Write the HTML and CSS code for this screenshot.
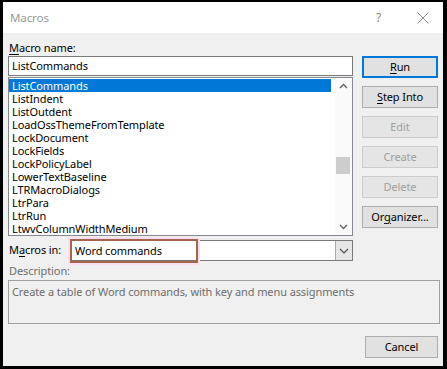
FILE: index.html
```html
<!DOCTYPE html>
<html>
<head>
<meta charset="utf-8">
<link rel="stylesheet" href="styles.css">
</head>
<body>
<div class="screen">
  <div class="dialog">
    <div class="titlebar">
      <span class="title">Macros</span>
      <span class="help">?</span>
      <svg class="close" width="12" height="12" viewBox="0 0 12 12"><path d="M0.5 0.5 L11.5 11.5 M11.5 0.5 L0.5 11.5" stroke="#8c8c8c" stroke-width="1" fill="none"/></svg>
    </div>
    <div class="content">
      <div class="main">
        <div class="left">
          <div class="label"><u>M</u>acro name:</div>
          <div class="input">ListCommands</div>
          <div class="list">
            <div class="items">
              <div class="item selected">ListCommands</div>
              <div class="item">ListIndent</div>
              <div class="item">ListOutdent</div>
              <div class="item">LoadOssThemeFromTemplate</div>
              <div class="item">LockDocument</div>
              <div class="item">LockFields</div>
              <div class="item">LockPolicyLabel</div>
              <div class="item">LowerTextBaseline</div>
              <div class="item">LTRMacroDialogs</div>
              <div class="item">LtrPara</div>
              <div class="item">LtrRun</div>
              <div class="item">LtwvColumnWidthMedium</div>
            </div>
            <div class="scrollbar">
              <svg class="arrow" width="17" height="17" viewBox="0 0 17 17"><path d="M5 10 L8.5 6.5 L12 10" stroke="#606060" stroke-width="1.3" fill="none"/></svg>
              <div class="track"><div class="thumb"></div></div>
              <svg class="arrow" width="17" height="17" viewBox="0 0 17 17"><path d="M5 7 L8.5 10.5 L12 7" stroke="#606060" stroke-width="1.3" fill="none"/></svg>
            </div>
          </div>
          <div class="macros-in">
            <div class="label inline">M<u>a</u>cros in:</div>
            <div class="combo">
              <div class="combo-text">Word commands</div>
              <div class="combo-btn"><svg width="10" height="6" viewBox="0 0 10 6"><path d="M1 1 L5 5 L9 1" stroke="#505050" stroke-width="1.2" fill="none"/></svg></div>
              <div class="highlight"></div>
            </div>
          </div>
        </div>
        <div class="right">
          <div class="btn default"><u>R</u>un</div>
          <div class="btn"><u>S</u>tep Into</div>
          <div class="btn disabled">Edit</div>
          <div class="btn disabled">Create</div>
          <div class="btn disabled">Delete</div>
          <div class="btn">Or<u>g</u>anizer...</div>
        </div>
      </div>
      <div class="label desc-label">Description:</div>
      <div class="desc">Create a table of Word commands, with key and menu assignments</div>
      <div class="footer">
        <div class="btn cancel">Cancel</div>
      </div>
    </div>
  </div>
</div>
</body>
</html>
```

FILE: styles.css
```css
* { box-sizing: border-box; }
html, body { margin: 0; padding: 0; background: #000; }
body { font-family: "Noto Sans", "Open Sans", sans-serif; font-size: 11px; letter-spacing: -0.1px; color: #000; }
.screen { width: 447px; height: 369px; padding: 2px 4px 3px 3px; background: #000; }
.dialog { width: 440px; height: 364px; background: #f0f0f0; display: flex; flex-direction: column; }
.titlebar { height: 31px; background: #fff; display: flex; align-items: center; padding-left: 7px; }
.title { color: #999; font-size: 11.5px; flex: 1; }
.help { color: #8c8c8c; font-size: 12px; margin-right: 36px; }
.close { margin-right: 14px; }
.content { padding: 0 3px 0 5px; flex: 1; display: flex; flex-direction: column; }
.main { display: flex; gap: 9px; }
.left { width: 345px; display: flex; flex-direction: column; }
.label { line-height: 16px; height: 16px; margin-top: 7px; padding-left: 1px; }
u { text-decoration: underline; text-underline-offset: 2px; }
.input { height: 20px; border: 1px solid #7a7a7a; background: #fff; line-height: 18px; padding-left: 3px; }
.list { height: 159px; margin-top: 1px; border: 1px solid #828790; background: #fff; display: flex; }
.items { flex: 1; padding: 1px 4px 0 0; }
.item { height: 13px; line-height: 13px; padding-left: 3px; white-space: nowrap; }
.item.selected { background: #0078d7; color: #fff; }
.scrollbar { width: 17px; background: #fafafa; display: flex; flex-direction: column; }
.arrow { display: block; }
.track { flex: 1; position: relative; }
.thumb { position: absolute; left: 1px; right: 2px; top: 62px; height: 17px; background: #cdcdcd; }
.macros-in { display: flex; align-items: flex-start; margin-top: 3px; height: 22px; }
.label.inline { margin-top: 3px; width: 63px; }
.combo { flex: 1; margin-top: 1px; height: 21px; border: 1px solid #7a7a7a; background: #fff; display: flex; position: relative; }
.combo-text { flex: 1; line-height: 19px; padding-left: 3px; }
.combo-btn { width: 17px; background: #e5e5e5; border-left: 1px solid #acacac; display: flex; align-items: center; justify-content: center; }
.highlight { position: absolute; left: -2px; top: -2px; width: 128px; height: 24px; border: 2px solid #a4654a; box-shadow: 0 0 0 2px #fbdff1; pointer-events: none; }
.right { width: 76px; display: flex; flex-direction: column; gap: 8px; padding-top: 23px; }
.btn { height: 22px; border: 1px solid #adadad; background: #e1e1e1; text-align: center; line-height: 20px; }
.btn.default { border: 2px solid #0078d7; line-height: 18px; }
.btn.disabled { color: #a0a0a0; border-color: #cccccc; background: #e5e5e5; }
.desc-label { color: #6d6d6d; margin-top: 2px; }
.desc { margin-top: 1px; height: 44px; border: 1px solid #a0a0a0; color: #6d6d6d; padding: 3px 3px; line-height: 16px; }
.footer { display: flex; justify-content: flex-end; margin-top: 12px; padding-right: 2px; }
.cancel { width: 73px; }
```
